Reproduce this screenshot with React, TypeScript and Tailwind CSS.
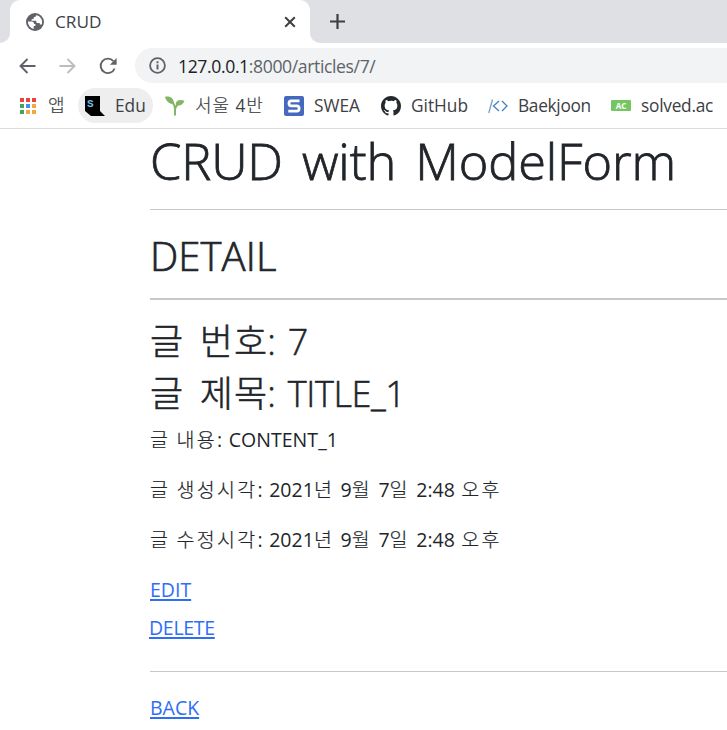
import type { ReactNode } from "react";

function Globe() {
  return (
    <svg width="18" height="18" viewBox="0 0 18 18">
      <circle cx="9" cy="9" r="9" fill="#5f6368" />
      <path d="M10.3 2c0 1.2-.6 1.9-1.8 2.1L7.7 4.4v1.4L5.5 6.5v1.3h3.8c.9 0 1.2.6 1.2 1.3v1h2.2c.8 0 1.2.5 1.2 1.3h1.8A7.2 7.2 0 0 0 10.3 2Z M1.9 8.5h3.7c1.7 0 2.5.9 2.5 2.4h1.3v2.2H7.7v2.8A7.2 7.2 0 0 1 1.9 8.5Z" fill="#fff" />
    </svg>
  );
}

function Bookmark({ icon, children, className }: { icon: ReactNode; children: ReactNode; className: string }) {
  return (
    <div className={`flex h-[35px] shrink-0 items-center ${className}`}>
      {icon}
      <span className="leading-[24px] whitespace-nowrap">{children}</span>
    </div>
  );
}

/* Latin letters and digits inside a Korean line, set without the wide Hangul tracking. */
function Latin({ children }: { children: ReactNode }) {
  return <span className="font-normal tracking-[0.05px] [-webkit-text-stroke:0]">{children}</span>;
}

function Timestamp({ label }: { label: string }) {
  return (
    <p className="mt-5 leading-[30px] font-light tracking-[2.3px] [word-spacing:-1px] [-webkit-text-stroke:0.2px]">
      글 {label}<Latin>:</Latin> <Latin>2021</Latin>년 <Latin>9</Latin>월 <Latin>7</Latin>일 <Latin>2:48</Latin> 오후
    </p>
  );
}

const APP_COLORS = ["#e8453c", "#e8453c", "#e8453c", "#3fa757", "#4a8af4", "#f2a93b", "#3fa757", "#f2a93b", "#f2a93b"];

export default function App() {
  return (
    <div className="flex h-[730px] w-[727px] flex-col overflow-hidden bg-white font-['Open_Sans','Noto_Sans_CJK_KR',sans-serif] text-[#212529]">
      <header className="shrink-0 border-b border-[#dadce0] text-[17.3px] text-[#3c4043]">
        <div className="flex h-[43px] bg-[#dee0e4]">
          <div className="h-full w-[10px] bg-white">
            <div className="h-full w-full rounded-br-[10px] bg-[#dee0e4]" />
          </div>
          <div className="flex h-full w-[300px] items-center rounded-t-[10px] bg-white pl-4">
            <Globe />
            <span className="ml-[11px] text-[17.2px] leading-[24px]">CRUD</span>
            <svg className="mr-[14px] ml-auto" width="12" height="12" viewBox="0 0 12 12" stroke="#3c4043" strokeWidth="2">
              <path d="m1.2 1.2 9.6 9.6M10.8 1.2 1.2 10.8" />
            </svg>
          </div>
          <div className="h-full w-[10px] bg-white">
            <div className="h-full w-full rounded-bl-[10px] bg-[#dee0e4]" />
          </div>
          <svg className="mt-[13px] ml-[9px]" width="17" height="17" viewBox="0 0 17 17" stroke="#3c4043" strokeWidth="2.2">
            <path d="M8.5 1v15M1 8.5h15" />
          </svg>
        </div>
        <div className="flex h-[45px] items-center">
          <svg className="ml-[19px]" width="17" height="16" viewBox="0 0 17 16" fill="none" stroke="#5f6368" strokeWidth="1.9">
            <path d="M16.5 8H2M8.5 1 1.5 8l7 7" />
          </svg>
          <svg className="ml-[23px]" width="17" height="16" viewBox="0 0 17 16" fill="none" stroke="#bbbdc0" strokeWidth="1.9">
            <path d="M.5 8H15M8.5 1l7 7-7 7" />
          </svg>
          <svg className="ml-[23px]" width="18" height="18" viewBox="0 0 18 18" fill="none">
            <path d="M15.6 11.5A7.2 7.2 0 1 1 14.4 4.2" stroke="#5f6368" strokeWidth="1.9" />
            <path d="M17.6 1v6.7h-6.7Z" fill="#5f6368" />
          </svg>
          <div className="ml-[18px] flex h-[35px] flex-1 items-center rounded-l-full bg-[#f1f3f4] pl-[14px]">
            <svg width="17" height="17" viewBox="0 0 17 17" fill="none" stroke="#5f6368" strokeWidth="1.8">
              <circle cx="8.5" cy="8.5" r="7.4" />
              <path d="M8.5 7.5v5M8.5 4.2v2" strokeWidth="2" />
            </svg>
            <span className="ml-3 text-[17.6px] leading-[24px] tracking-[-0.38px] text-[#5f6368]">
              <span className="text-[#202124]">127.0.0.1</span>:8000/articles/7/
            </span>
          </div>
        </div>
        <div className="flex h-[40px] text-[17.3px]">
          <Bookmark
            className="ml-5 w-[58px]"
            icon={
              <div className="mr-[12px] grid grid-cols-3 gap-[2px]">
                {APP_COLORS.map((c, i) => (
                  <i key={i} className="size-[4px]" style={{ background: c }} />
                ))}
              </div>
            }
          >
            <span className="text-[18px] font-light [-webkit-text-stroke:0.2px]">앱</span>
          </Bookmark>
          <Bookmark
            className="w-[75px] rounded-full bg-[#eeeeee] pl-[7px]"
            icon={
              <svg className="mr-[10px]" width="20" height="20" viewBox="0 0 20 20">
                <path d="M0 0h15v15l5 5H6l-6-5Z" fill="#000" />
                <text x="2" y="11" fontSize="11" fontWeight="700" fill="#72bce8" className="font-['Liberation_Mono',monospace]">S</text>
              </svg>
            }
          >
            Edu
          </Bookmark>
          <Bookmark
            className="w-[118px] pl-[12px]"
            icon={
              <svg className="mr-[10px]" width="20" height="20" viewBox="0 0 20 20" fill="#84b566">
                <path d="M0 .7C5-.3 9 2 9.2 8 5 8.5 1 5.5 0 .7ZM10.7 8.5C10.5 4.5 14.5 3 19.5 4.7 18 9 14 10.8 10.7 8.5Z" />
                <path d="M5 4.5c3 2 4.7 4.500 5 8v7M16 6.500c-3.500 1.500-5.500 3.500-6 7" fill="none" stroke="#84b566" strokeWidth="2" />
              </svg>
            }
          >
            <span className="text-[18px] font-light tracking-[0.9px] [-webkit-text-stroke:0.2px]">
              서울 <span className="text-[17.3px] font-normal [-webkit-text-stroke:0]">4</span>반
            </span>
          </Bookmark>
          <Bookmark
            className="w-[97px] pl-[13px]"
            icon={
              <svg className="mr-[10px]" width="20" height="20" viewBox="0 0 20 20">
                <rect width="20" height="20" rx="2" fill="#4669c0" />
                <path d="M15.5 4.8H7.2Q5 4.8 5 7.3T7.2 9.9h5.6q2.3 0 2.3 2.6t-2.3 2.6H4.3" fill="none" stroke="#fff" strokeWidth="2.8" />
              </svg>
            }
          >
            SWEA
          </Bookmark>
          <Bookmark
            className="w-[107px] pl-[13px]"
            icon={
              <svg className="mr-[10px]" width="20" height="20" viewBox="0 0 16 16" fill="#24292e">
                <path d="M8 0C3.58 0 0 3.58 0 8c0 3.54 2.29 6.53 5.47 7.59.4.07.55-.17.55-.38 0-.19-.01-.82-.01-1.49-2.01.37-2.53-.49-2.69-.94-.09-.23-.48-.94-.82-1.13-.28-.15-.68-.52-.01-.53.63-.01 1.08.58 1.23.82.72 1.21 1.87.87 2.33.66.07-.52.28-.87.51-1.07-1.78-.2-3.64-.89-3.64-3.95 0-.87.31-1.59.82-2.15-.08-.2-.36-1.02.08-2.12 0 0 .67-.21 2.2.82A7.6 7.6 0 0 1 8 3.86c.68 0 1.36.09 2 .27 1.53-1.04 2.2-.82 2.2-.82.44 1.1.16 1.92.08 2.12.51.56.82 1.27.82 2.15 0 3.07-1.87 3.75-3.65 3.95.29.25.54.73.54 1.48 0 1.07-.01 1.93-.01 2.2 0 .21.15.46.55.38A8.01 8.01 0 0 0 16 8c0-4.42-3.58-8-8-8Z" />
              </svg>
            }
          >
            GitHub
          </Bookmark>
          <Bookmark
            className="w-[123px] pl-[13px]"
            icon={
              <svg className="mr-[10px]" width="20" height="20" viewBox="0 0 20 20" fill="none" strokeWidth="1.3">
                <path d="M4.5 3.5.8 17" stroke="#72a0cf" />
                <path d="m11 5-5.5 5 5.5 5M14 5l5 5-5 5" stroke="#3f7fc4" />
              </svg>
            }
          >
            <span className="tracking-[-0.3px]">Baekjoon</span>
          </Bookmark>
          <Bookmark
            className="pl-[13px]"
            icon={<span className="mr-[10px] h-[11px] w-[20px] rounded-[1px] bg-[#73c661] text-center font-['Open_Sans'] text-[8px] leading-[11px] font-bold text-white">AC</span>}
          >
            <span className="tracking-[-0.25px]">solved.ac</span>
          </Bookmark>
        </div>
      </header>
      <main className="pl-[150px] text-[19.5px]">
        <h1 className="pt-[2px] text-[50.5px] leading-[60px] font-light tracking-[-0.1px] whitespace-nowrap [word-spacing:6px] [-webkit-text-stroke:0.8px]">CRUD with ModelForm</h1>
        <hr className="mt-[18px] border-[#c8c8c9]" />
        <h2 className="mt-[22px] text-[40px] leading-[48px] font-light tracking-[0.1px] [-webkit-text-stroke:0.7px]">DETAIL</h2>
        <hr className="mt-[18px] border-t-2 border-[#c8c8c9]" />
        <h3 className="mt-4 text-[36px] leading-[52px] font-light tracking-[1.1px] [word-spacing:5px] [-webkit-text-stroke:0.5px]">
          글 번호<span className="-ml-px tracking-[-0.4px] [word-spacing:3.5px]">: 7</span>
        </h3>
        <h3 className="text-[36px] leading-[52px] font-light tracking-[1.1px] [word-spacing:5px] [-webkit-text-stroke:0.5px]">
          글 제목<span className="-ml-px tracking-[-0.4px] [word-spacing:3.5px]">: TITLE_1</span>
        </h3>
        <p className="mt-[5px] leading-[30px] font-light tracking-[2.3px] [word-spacing:-1px] [-webkit-text-stroke:0.2px]">
          글 내용<Latin>:</Latin> <Latin>CONTENT_1</Latin>
        </p>
        <Timestamp label="생성시각" />
        <Timestamp label="수정시각" />
        <div className="mt-5 flex leading-[30px] text-[#2f6df6]"><a className="underline decoration-2 underline-offset-2">EDIT</a></div>
        <div className="mt-2 -ml-px flex leading-[30px] tracking-[-0.3px] text-[#2f6df6]"><a className="underline decoration-2 underline-offset-2">DELETE</a></div>
        <hr className="mt-[28px] border-[#c8c8c9]" />
        <div className="mt-[21px] flex leading-[30px] text-[#2f6df6]"><a className="underline decoration-2 underline-offset-2">BACK</a></div>
      </main>
    </div>
  );
}
